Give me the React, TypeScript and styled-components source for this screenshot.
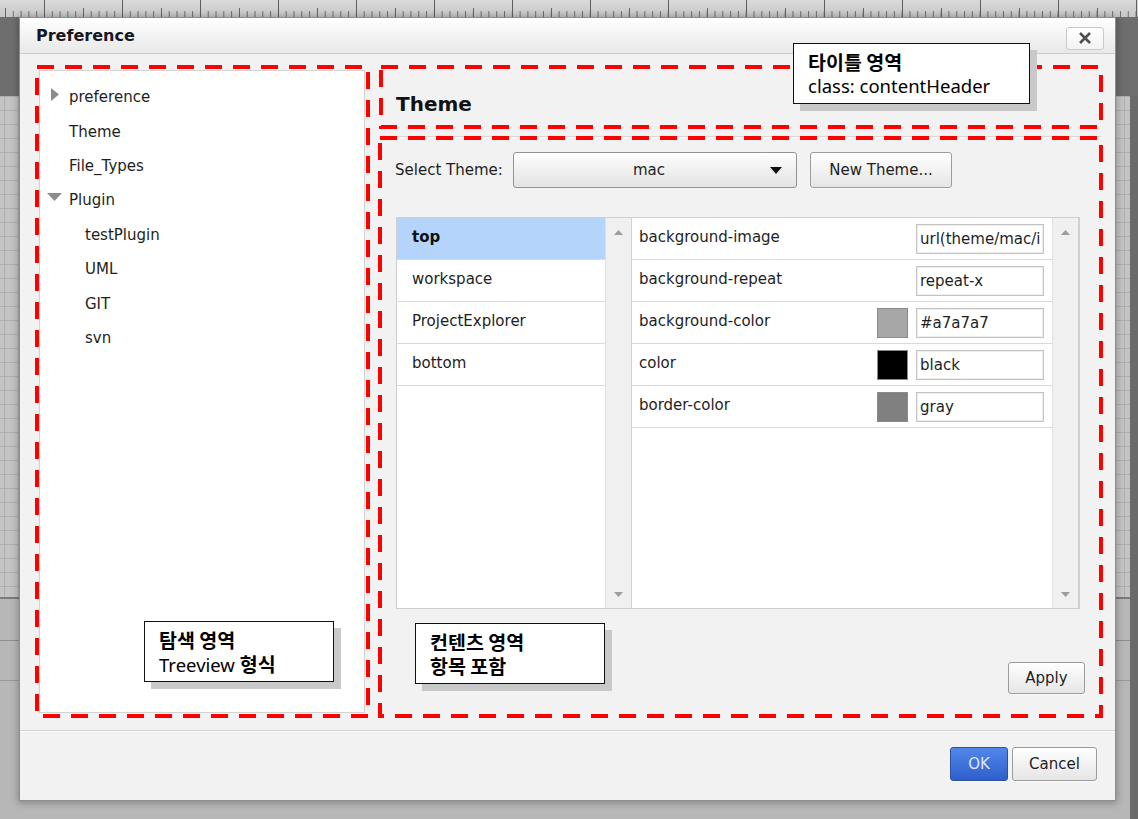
import React from "react";
import styled, { createGlobalStyle } from "styled-components";

const GlobalStyle = createGlobalStyle`
  html, body { margin: 0; padding: 0; background: #6e6e6e; }
  body { font-family: "DejaVu Sans", "Liberation Sans", sans-serif; color: #1e1e1e; }
  * { box-sizing: border-box; }
`;

const Page = styled.div`
  width: 1138px;
  height: 819px;
  overflow: hidden;
  display: flex;
  flex-direction: column;
`;

const Ruler = styled.div`
  height: 17px;
  flex: none;
  background:
    linear-gradient(90deg, #5e5e5e 0 1px, transparent 1px) 44px 0 / 78px 100% repeat-x,
    linear-gradient(90deg, #666 0 1px, transparent 1px) 83px 100% / 78px 9px repeat-x,
    linear-gradient(90deg, #6c6c6c 0 1px, transparent 1px) 44px 100% / 7.8px 6px repeat-x,
    linear-gradient(#dadada, #c6c6c6);
`;

const Desk = styled.div`
  flex: 1;
  background:
    linear-gradient(#6e6e6e, #6e6e6e) 0 0 / 100% 79px no-repeat,
    linear-gradient(#6a6a6a, #6a6a6a) 100% 0 / 8px 100% no-repeat,
    linear-gradient(#7c7c7c, #7c7c7c) 0 580px / 100% 2px no-repeat,
    linear-gradient(#8e8e8e, #8e8e8e) 0 623px / 100% 1px no-repeat,
    linear-gradient(#9a9a9a, #9a9a9a) 0 663px / 100% 1px no-repeat,
    linear-gradient(#b7b7b7, #b7b7b7) 0 582px / 100% 220px no-repeat,
    linear-gradient(90deg, #b0b0b0 0 1px, transparent 1px) 4px 0 / 14px 14px,
    linear-gradient(#b0b0b0 0 1px, transparent 1px) 0 9px / 14px 14px,
    #c4c4c4;
`;

const Dialog = styled.div`
  position: relative;
  margin: 1px 0 0 20px;
  width: 1095px;
  height: 782px;
  background: #f2f2f2;
  display: flex;
  flex-direction: column;
  box-shadow: 0 0 0 1px #8e8e8e, 0 1px 7px 2px rgba(0, 0, 0, 0.28);
`;

const TitleBar = styled.div`
  height: 36px;
  flex: none;
  display: flex;
  align-items: center;
  justify-content: space-between;
  padding: 0 11px 0 16px;
  background: linear-gradient(#ffffff, #e8e8e8);
  border-bottom: 1px solid #cdcdcd;
`;

const Title = styled.div`
  font-size: 16px;
  font-weight: 700;
  color: #161626;
  margin-top: -1px;
`;

const CloseButton = styled.button`
  width: 38px;
  height: 23px;
  margin-top: 5px;
  padding: 0;
  display: flex;
  align-items: center;
  justify-content: center;
  background: linear-gradient(#ffffff, #f3f3f3);
  border: 1px solid #c9c9c9;
  border-radius: 3px;
`;

const Body = styled.div`
  flex: 1;
  display: flex;
  gap: 16px;
  padding: 16px 14px 0 19px;
`;

const TreePanel = styled.div`
  width: 326px;
  height: 643px;
  flex: none;
  background: #fff;
  border: 1px solid #d3d3d3;
  padding-top: 9px;
`;

const TreeRow = styled.div<{ $level: number }>`
  height: 34.4px;
  display: flex;
  align-items: center;
  padding-left: ${(p) => (p.$level ? 45 : 0)}px;
  font-size: 15px;
  color: #1e1e1e;
`;

const Twisty = styled.span`
  width: 29px;
  flex: none;
  display: flex;
  justify-content: center;
  align-items: center;
  margin-top: -6px;
`;

const RightColumn = styled.div`
  flex: 1;
  display: flex;
  flex-direction: column;
`;

const ContentHeader = styled.div`
  height: 67px;
  flex: none;
  padding: 22px 0 0 15px;
  border-bottom: 1px solid #d6d6d6;
  box-shadow: 0 1px 0 #fbfbfb;
`;

const HeaderTitle = styled.h1`
  margin: 0;
  font-size: 20px;
  line-height: 24px;
  font-weight: 700;
  color: #111;
`;

const Content = styled.div`
  flex: 1;
  display: flex;
  flex-direction: column;
  padding: 15px 16px 0 14px;
`;

const SelectRow = styled.div`
  display: flex;
  align-items: center;
  height: 36px;
`;

const FieldLabel = styled.span`
  width: 118px;
  flex: none;
  font-size: 15px;
`;

const Dropdown = styled.div`
  width: 284px;
  height: 36px;
  display: flex;
  align-items: center;
  padding: 0 14px;
  border: 1px solid #939393;
  border-radius: 3px;
  background: linear-gradient(#fefefe, #e3e3e3);
  font-size: 15px;
`;

const DropdownValue = styled.span`
  flex: 1;
  text-align: center;
`;

const Button = styled.button<{ $w: number; $h?: number; $primary?: boolean }>`
  width: ${(p) => p.$w}px;
  height: ${(p) => p.$h ?? 34}px;
  flex: none;
  padding: 0;
  font-family: "DejaVu Sans", sans-serif;
  font-size: 15px;
  border-radius: 3px;
  border: 1px solid ${(p) => (p.$primary ? "#2c4fa3" : "#9c9c9c")};
  background: ${(p) =>
    p.$primary ? "linear-gradient(#5287ea, #2f5fcb)" : "linear-gradient(#ffffff, #e5e5e5)"};
  color: ${(p) => (p.$primary ? "#dfe7ff" : "#1e1e1e")};
  box-shadow: 0 1px 0 rgba(255, 255, 255, 0.7);
`;

const NewThemeButton = styled(Button)`
  margin-left: 13px;
`;

const Grid = styled.div`
  margin: 29px 0 0 1px;
  width: 684px;
  height: 392px;
  border: 1px solid #cfcfcf;
  display: grid;
  grid-template-columns: 208px 27px 420px 27px;
  background: #fff;
`;

const List = styled.div`
  display: flex;
  flex-direction: column;
`;

const ListItem = styled.div<{ $selected?: boolean }>`
  height: 42px;
  flex: none;
  border-bottom: 1px solid #d9d9d9;
  padding: 10px 0 0 15px;
  line-height: 18px;
  font-size: 15px;
  background: ${(p) => (p.$selected ? "#b4d4fc" : "#fff")};
  font-weight: ${(p) => (p.$selected ? 700 : 400)};
  color: ${(p) => (p.$selected ? "#111" : "#1e1e1e")};
`;

const ScrollTrack = styled.div`
  background: #f0f0f0;
  border-left: 1px solid #e1e1e1;
  border-right: 1px solid #d2d2d2;
  display: flex;
  flex-direction: column;
  justify-content: space-between;
  align-items: center;
  padding: 12px 0 11px;
`;

const PropTable = styled.div`
  display: flex;
  flex-direction: column;
`;

const PropRow = styled.div`
  height: 42px;
  flex: none;
  display: flex;
  align-items: flex-start;
  border-bottom: 1px solid #d9d9d9;
  padding: 6px 8px 0 7px;
`;

const PropName = styled.span`
  flex: 1;
  padding-top: 4px;
  line-height: 18px;
  font-size: 15px;
`;

const Swatch = styled.span<{ $color: string }>`
  width: 31px;
  height: 30px;
  flex: none;
  margin-right: 8px;
  background: ${(p) => p.$color};
  border: 1px solid #8a8a8a;
`;

const ValueInput = styled.input`
  width: 128px;
  height: 30px;
  flex: none;
  padding: 0 3px;
  border: 1px solid #c3c3c3;
  box-shadow: inset 0 0 0 1px #efefef;
  background: #fff;
  font-family: "DejaVu Sans", sans-serif;
  font-size: 15px;
  color: #1e1e1e;
  outline: none;
`;

const ApplyRow = styled.div`
  display: flex;
  justify-content: flex-end;
  margin-top: 53px;
`;

const Footer = styled.div`
  height: 70px;
  flex: none;
  display: flex;
  justify-content: flex-end;
  align-items: flex-start;
  gap: 4px;
  padding: 16px 18px 0 0;
  border-top: 1px solid #d3d3d3;
  box-shadow: inset 0 1px 0 #fbfbfb;
`;

const FrameSvg = styled.svg<{ $x: number; $y: number }>`
  position: absolute;
  left: ${(p) => p.$x}px;
  top: ${(p) => p.$y}px;
  pointer-events: none;
`;

const Note = styled.div<{ $x: number; $y: number; $w: number }>`
  position: absolute;
  left: ${(p) => p.$x}px;
  top: ${(p) => p.$y}px;
  width: ${(p) => p.$w}px;
  height: 61px;
  background: #fff;
  border: 1px solid #111;
  box-shadow: 7px 7px 0 #c9c9c9;
  padding: 6px 14px;
  font-family: "Noto Sans", "Noto Sans CJK KR", sans-serif;
  font-size: 18.5px;
  line-height: 24px;
  color: #000;
  white-space: nowrap;
`;

const Hangul = styled.span`
  font-family: "Noto Sans CJK KR", sans-serif;
  font-size: 19.5px;
  font-weight: 700;
`;

const NoteLine = styled.div`
  height: 24px;
`;

function DashedFrame({ x, y, w, h }: { x: number; y: number; w: number; h: number }) {
  return (
    <FrameSvg $x={x} $y={y} width={w} height={h}>
      <rect
        x={2}
        y={2}
        width={w - 4}
        height={h - 4}
        fill="none"
        stroke="#ff0000"
        strokeWidth={4}
        strokeDasharray="17 11"
      />
    </FrameSvg>
  );
}

const TriRight = () => (
  <svg width="8" height="13" viewBox="0 0 8 13">
    <polygon points="0,0 8,6.5 0,13" fill="#8c8c8c" />
  </svg>
);
const TriDown = () => (
  <svg width="15" height="8" viewBox="0 0 15 8">
    <polygon points="0,0 15,0 7.5,8" fill="#8c8c8c" />
  </svg>
);
const ScrollUp = () => (
  <svg width="9" height="5" viewBox="0 0 9 5">
    <polygon points="0,5 4.5,0 9,5" fill="#9d9d9d" />
  </svg>
);
const ScrollDown = () => (
  <svg width="9" height="5" viewBox="0 0 9 5">
    <polygon points="0,0 9,0 4.5,5" fill="#9d9d9d" />
  </svg>
);

const tree: { label: string; level: number; twisty?: "open" | "closed" }[] = [
  { label: "preference", level: 0, twisty: "closed" },
  { label: "Theme", level: 0 },
  { label: "File_Types", level: 0 },
  { label: "Plugin", level: 0, twisty: "open" },
  { label: "testPlugin", level: 1 },
  { label: "UML", level: 1 },
  { label: "GIT", level: 1 },
  { label: "svn", level: 1 },
];

const sections = ["top", "workspace", "ProjectExplorer", "bottom"];

const props: { name: string; value: string; swatch?: string }[] = [
  { name: "background-image", value: "url(theme/mac/images/top_bg.png)" },
  { name: "background-repeat", value: "repeat-x" },
  { name: "background-color", value: "#a7a7a7", swatch: "#a7a7a7" },
  { name: "color", value: "black", swatch: "#000000" },
  { name: "border-color", value: "gray", swatch: "#808080" },
];

export default function App() {
  return (
    <Page>
      <GlobalStyle />
      <Ruler />
      <Desk>
        <Dialog>
          <TitleBar>
            <Title>Preference</Title>
            <CloseButton aria-label="close">
              <svg width="12" height="12" viewBox="0 0 12 12">
                <path d="M1 1 L11 11 M11 1 L1 11" stroke="#505050" strokeWidth="2.6" />
              </svg>
            </CloseButton>
          </TitleBar>
          <Body>
            <TreePanel>
              {tree.map((n) => (
                <TreeRow key={n.label} $level={n.level}>
                  {n.level === 0 && (
                    <Twisty>
                      {n.twisty === "closed" && <TriRight />}
                      {n.twisty === "open" && <TriDown />}
                    </Twisty>
                  )}
                  {n.label}
                </TreeRow>
              ))}
            </TreePanel>
            <RightColumn>
              <ContentHeader>
                <HeaderTitle>Theme</HeaderTitle>
              </ContentHeader>
              <Content>
                <SelectRow>
                  <FieldLabel>Select Theme:</FieldLabel>
                  <Dropdown>
                    <DropdownValue>mac</DropdownValue>
                    <svg width="12" height="7" viewBox="0 0 12 7">
                      <polygon points="0,0 12,0 6,7" fill="#111" />
                    </svg>
                  </Dropdown>
                  <NewThemeButton $w={142} $h={36}>
                    New Theme...
                  </NewThemeButton>
                </SelectRow>
                <Grid>
                  <List>
                    {sections.map((s, i) => (
                      <ListItem key={s} $selected={i === 0}>
                        {s}
                      </ListItem>
                    ))}
                  </List>
                  <ScrollTrack>
                    <ScrollUp />
                    <ScrollDown />
                  </ScrollTrack>
                  <PropTable>
                    {props.map((p) => (
                      <PropRow key={p.name}>
                        <PropName>{p.name}</PropName>
                        {p.swatch && <Swatch $color={p.swatch} />}
                        <ValueInput readOnly defaultValue={p.value} />
                      </PropRow>
                    ))}
                  </PropTable>
                  <ScrollTrack>
                    <ScrollUp />
                    <ScrollDown />
                  </ScrollTrack>
                </Grid>
                <ApplyRow>
                  <Button $w={77} $h={32}>
                    Apply
                  </Button>
                </ApplyRow>
              </Content>
            </RightColumn>
          </Body>
          <Footer>
            <Button $w={58} $primary>
              OK
            </Button>
            <Button $w={85}>Cancel</Button>
          </Footer>

          <DashedFrame x={15} y={47} w={335} h={653} />
          <DashedFrame x={359} y={47} w={724} h={64} />
          <DashedFrame x={358} y={118} w={725} h={582} />

          <Note $x={773} $y={25} $w={237}>
            <NoteLine>
              <Hangul>타이틀 영역</Hangul>
            </NoteLine>
            <NoteLine>class: contentHeader</NoteLine>
          </Note>
          <Note $x={124} $y={603} $w={190}>
            <NoteLine>
              <Hangul>탐색 영역</Hangul>
            </NoteLine>
            <NoteLine>
              Treeview <Hangul>형식</Hangul>
            </NoteLine>
          </Note>
          <Note $x={395} $y={605} $w={190}>
            <NoteLine>
              <Hangul>컨텐츠 영역</Hangul>
            </NoteLine>
            <NoteLine>
              <Hangul>항목 포함</Hangul>
            </NoteLine>
          </Note>
        </Dialog>
      </Desk>
    </Page>
  );
}
